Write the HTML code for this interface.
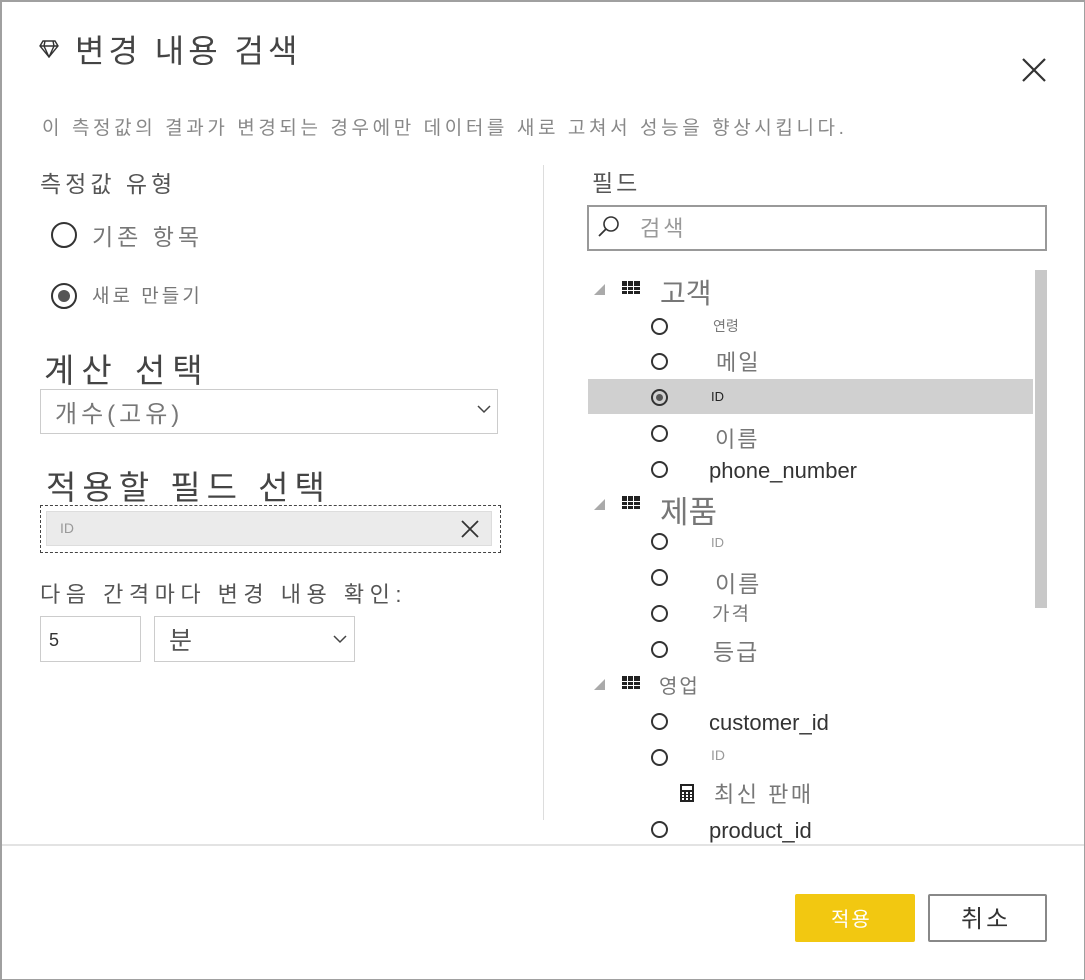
<!DOCTYPE html>
<html><head><meta charset="utf-8"><style>
*{margin:0;padding:0;box-sizing:border-box}
body{width:1085px;height:980px;background:#fff;font-family:"Liberation Sans","Noto Sans CJK KR",sans-serif;position:relative;overflow:hidden;color:#333}
.frame{position:absolute;left:0;top:0;width:1085px;height:980px;border:2px solid #a0a0a0;border-right-width:1px;border-bottom-width:1px}
.a{position:absolute;white-space:nowrap;line-height:1}
.rad{position:absolute;width:17px;height:17px;border:2px solid #333;border-radius:50%}
.rad.s::after{content:"";position:absolute;left:3px;top:3px;width:7px;height:7px;border-radius:50%;background:#555}
.big{width:26px;height:26px}
.big.s::after{left:5px;top:5px;width:12px;height:12px}
.tbl{position:absolute;width:18px;height:15px;background:#222;background-image:linear-gradient(90deg,transparent 5px,#fff 5px,#fff 6px,transparent 6px,transparent 11px,#fff 11px,#fff 12px,transparent 12px),linear-gradient(transparent 5px,#fff 5px,#fff 6px,transparent 6px,transparent 9px,#fff 9px,#fff 10px,transparent 10px,transparent 13px,#fff 13px)}
.tri{position:absolute;width:0;height:0;border-left:11px solid transparent;border-bottom:11px solid #aaa}
.g{color:#777}
</style></head><body>
<div class="frame"></div>
<svg class="a" style="left:39px;top:40px" width="20" height="18" viewBox="0 0 20 18"><path d="M4 1h12l3 5-9 11L1 6z M1 6h18 M6 1l-1 5 5 11 5-11-1-5 M10 1v0" fill="none" stroke="#333" stroke-width="1.4"/></svg>
<div class="a" style="left:75px;top:35px;font-size:32px;color:#444;letter-spacing:4px">변경 내용 검색</div>
<svg class="a" style="left:1021px;top:57px" width="26" height="26"><path d="M2 2l22 22M24 2L2 24" stroke="#333" stroke-width="2.2"/></svg>
<div class="a g" style="left:42px;top:119px;font-size:19px;letter-spacing:3.6px;color:#888">이 측정값의 결과가 변경되는 경우에만 데이터를 새로 고쳐서 성능을 향상시킵니다.</div>
<div class="a" style="left:40px;top:173px;font-size:23px;color:#555;letter-spacing:4px">측정값 유형</div>
<div class="rad big" style="left:51px;top:222px"></div>
<div class="a g" style="left:92px;top:226px;font-size:23px;letter-spacing:4px">기존 항목</div>
<div class="rad big s" style="left:51px;top:283px"></div>
<div class="a g" style="left:92px;top:287px;font-size:19px;letter-spacing:3px">새로 만들기</div>
<div class="a" style="left:44px;top:354px;font-size:33px;color:#444;letter-spacing:7px">계산 선택</div>
<div class="a" style="left:40px;top:389px;width:458px;height:45px;border:1px solid #ccc"></div>
<div class="a g" style="left:55px;top:403px;font-size:24px;letter-spacing:4px">개수(고유)</div>
<svg class="a" style="left:477px;top:404px" width="14" height="10"><path d="M1 2l6 6 6-6" fill="none" stroke="#444" stroke-width="1.5"/></svg>
<div class="a" style="left:46px;top:471px;font-size:33px;color:#444;letter-spacing:6px">적용할 필드 선택</div>
<div class="a" style="left:40px;top:505px;width:461px;height:48px;border:1px dashed #444"></div>
<div class="a" style="left:46px;top:511px;width:446px;height:35px;background:#ebebeb;border:1px solid #ddd"></div>
<div class="a g" style="left:60px;top:521px;font-size:14px;color:#999">ID</div>
<svg class="a" style="left:461px;top:520px" width="18" height="18"><path d="M1 1l16 16M17 1L1 17" stroke="#333" stroke-width="1.8"/></svg>
<div class="a" style="left:40px;top:584px;font-size:22px;color:#555;letter-spacing:5.5px">다음 간격마다 변경 내용 확인:</div>
<div class="a" style="left:40px;top:616px;width:101px;height:46px;border:1px solid #ccc"></div>
<div class="a" style="left:49px;top:631px;font-size:18px;color:#333">5</div>
<div class="a" style="left:154px;top:616px;width:201px;height:46px;border:1px solid #ccc"></div>
<div class="a" style="left:169px;top:629px;font-size:25px;color:#555">분</div>
<svg class="a" style="left:333px;top:634px" width="14" height="10"><path d="M1 2l6 6 6-6" fill="none" stroke="#444" stroke-width="1.5"/></svg>
<div class="a" style="left:543px;top:165px;width:1px;height:655px;background:#ddd"></div>
<div class="a" style="left:592px;top:172px;font-size:23px;color:#555;letter-spacing:3px">필드</div>
<div class="a" style="left:587px;top:205px;width:460px;height:46px;border:2px solid #999"></div>
<svg class="a" style="left:597px;top:215px" width="24" height="24"><circle cx="14" cy="9" r="7" fill="none" stroke="#333" stroke-width="1.6"/><path d="M9 14l-7 7" stroke="#333" stroke-width="1.8"/></svg>
<div class="a" style="left:640px;top:218px;font-size:22px;color:#999;letter-spacing:3px">검색</div>
<div class="a" style="left:1035px;top:270px;width:12px;height:338px;background:#c8c8c8"></div>
<div class="a" style="left:588px;top:379px;width:445px;height:35px;background:#d0d0d0"></div>
<div class="tri" style="left:594px;top:284px"></div><div class="tbl" style="left:622px;top:281px"></div>
<div class="a g" style="left:660px;top:280px;font-size:28px">고객</div>
<div class="rad" style="left:651px;top:318px"></div><div class="a g" style="left:713px;top:319px;font-size:14px">연령</div>
<div class="rad" style="left:651px;top:353px"></div><div class="a g" style="left:716px;top:352px;font-size:22px;letter-spacing:2px">메일</div>
<div class="rad s" style="left:651px;top:389px"></div><div class="a" style="left:711px;top:390px;font-size:13px;color:#222">ID</div>
<div class="rad" style="left:651px;top:425px"></div><div class="a g" style="left:715px;top:429px;font-size:22px;letter-spacing:2px">이름</div>
<div class="rad" style="left:651px;top:461px"></div><div class="a" style="left:709px;top:460px;font-size:22px;color:#333">phone_number</div>
<div class="tri" style="left:594px;top:499px"></div><div class="tbl" style="left:622px;top:496px"></div>
<div class="a g" style="left:660px;top:497px;font-size:31px">제품</div>
<div class="rad" style="left:651px;top:533px"></div><div class="a g" style="left:711px;top:536px;font-size:13px;color:#999">ID</div>
<div class="rad" style="left:651px;top:569px"></div><div class="a g" style="left:715px;top:573px;font-size:23px;letter-spacing:2px">이름</div>
<div class="rad" style="left:651px;top:605px"></div><div class="a g" style="left:712px;top:605px;font-size:19px;letter-spacing:2px">가격</div>
<div class="rad" style="left:651px;top:641px"></div><div class="a g" style="left:713px;top:641px;font-size:23px;letter-spacing:2px">등급</div>
<div class="tri" style="left:594px;top:679px"></div><div class="tbl" style="left:622px;top:676px"></div>
<div class="a g" style="left:659px;top:677px;font-size:20px;letter-spacing:2px">영업</div>
<div class="rad" style="left:651px;top:713px"></div><div class="a" style="left:709px;top:712px;font-size:22px;color:#333">customer_id</div>
<div class="rad" style="left:651px;top:749px"></div><div class="a g" style="left:711px;top:748px;font-size:14px;color:#999">ID</div>
<svg class="a" style="left:680px;top:784px" width="14" height="18"><rect width="14" height="18" fill="#222"/><rect x="2" y="2" width="10" height="4" fill="#fff"/><g fill="#fff"><rect x="2" y="8" width="2" height="2"/><rect x="6" y="8" width="2" height="2"/><rect x="10" y="8" width="2" height="2"/><rect x="2" y="11" width="2" height="2"/><rect x="6" y="11" width="2" height="2"/><rect x="10" y="11" width="2" height="2"/><rect x="2" y="14" width="2" height="2"/><rect x="6" y="14" width="2" height="2"/><rect x="10" y="14" width="2" height="2"/></g></svg>
<div class="a g" style="left:714px;top:784px;font-size:22px;letter-spacing:2.5px">최신 판매</div>
<div class="rad" style="left:651px;top:821px"></div><div class="a" style="left:709px;top:820px;font-size:22px;color:#333">product_id</div>
<div class="a" style="left:2px;top:844px;width:1082px;height:2px;background:#e3e3e3"></div>
<div class="a" style="left:795px;top:894px;width:120px;height:48px;background:#f2c811;border-radius:2px"></div>
<div class="a" style="left:831px;top:910px;font-size:20px;color:#fff;letter-spacing:2px">적용</div>
<div class="a" style="left:928px;top:894px;width:119px;height:48px;border:2px solid #888;border-radius:2px"></div>
<div class="a" style="left:961px;top:908px;font-size:24px;color:#333;letter-spacing:3px">취소</div>
</body></html>
